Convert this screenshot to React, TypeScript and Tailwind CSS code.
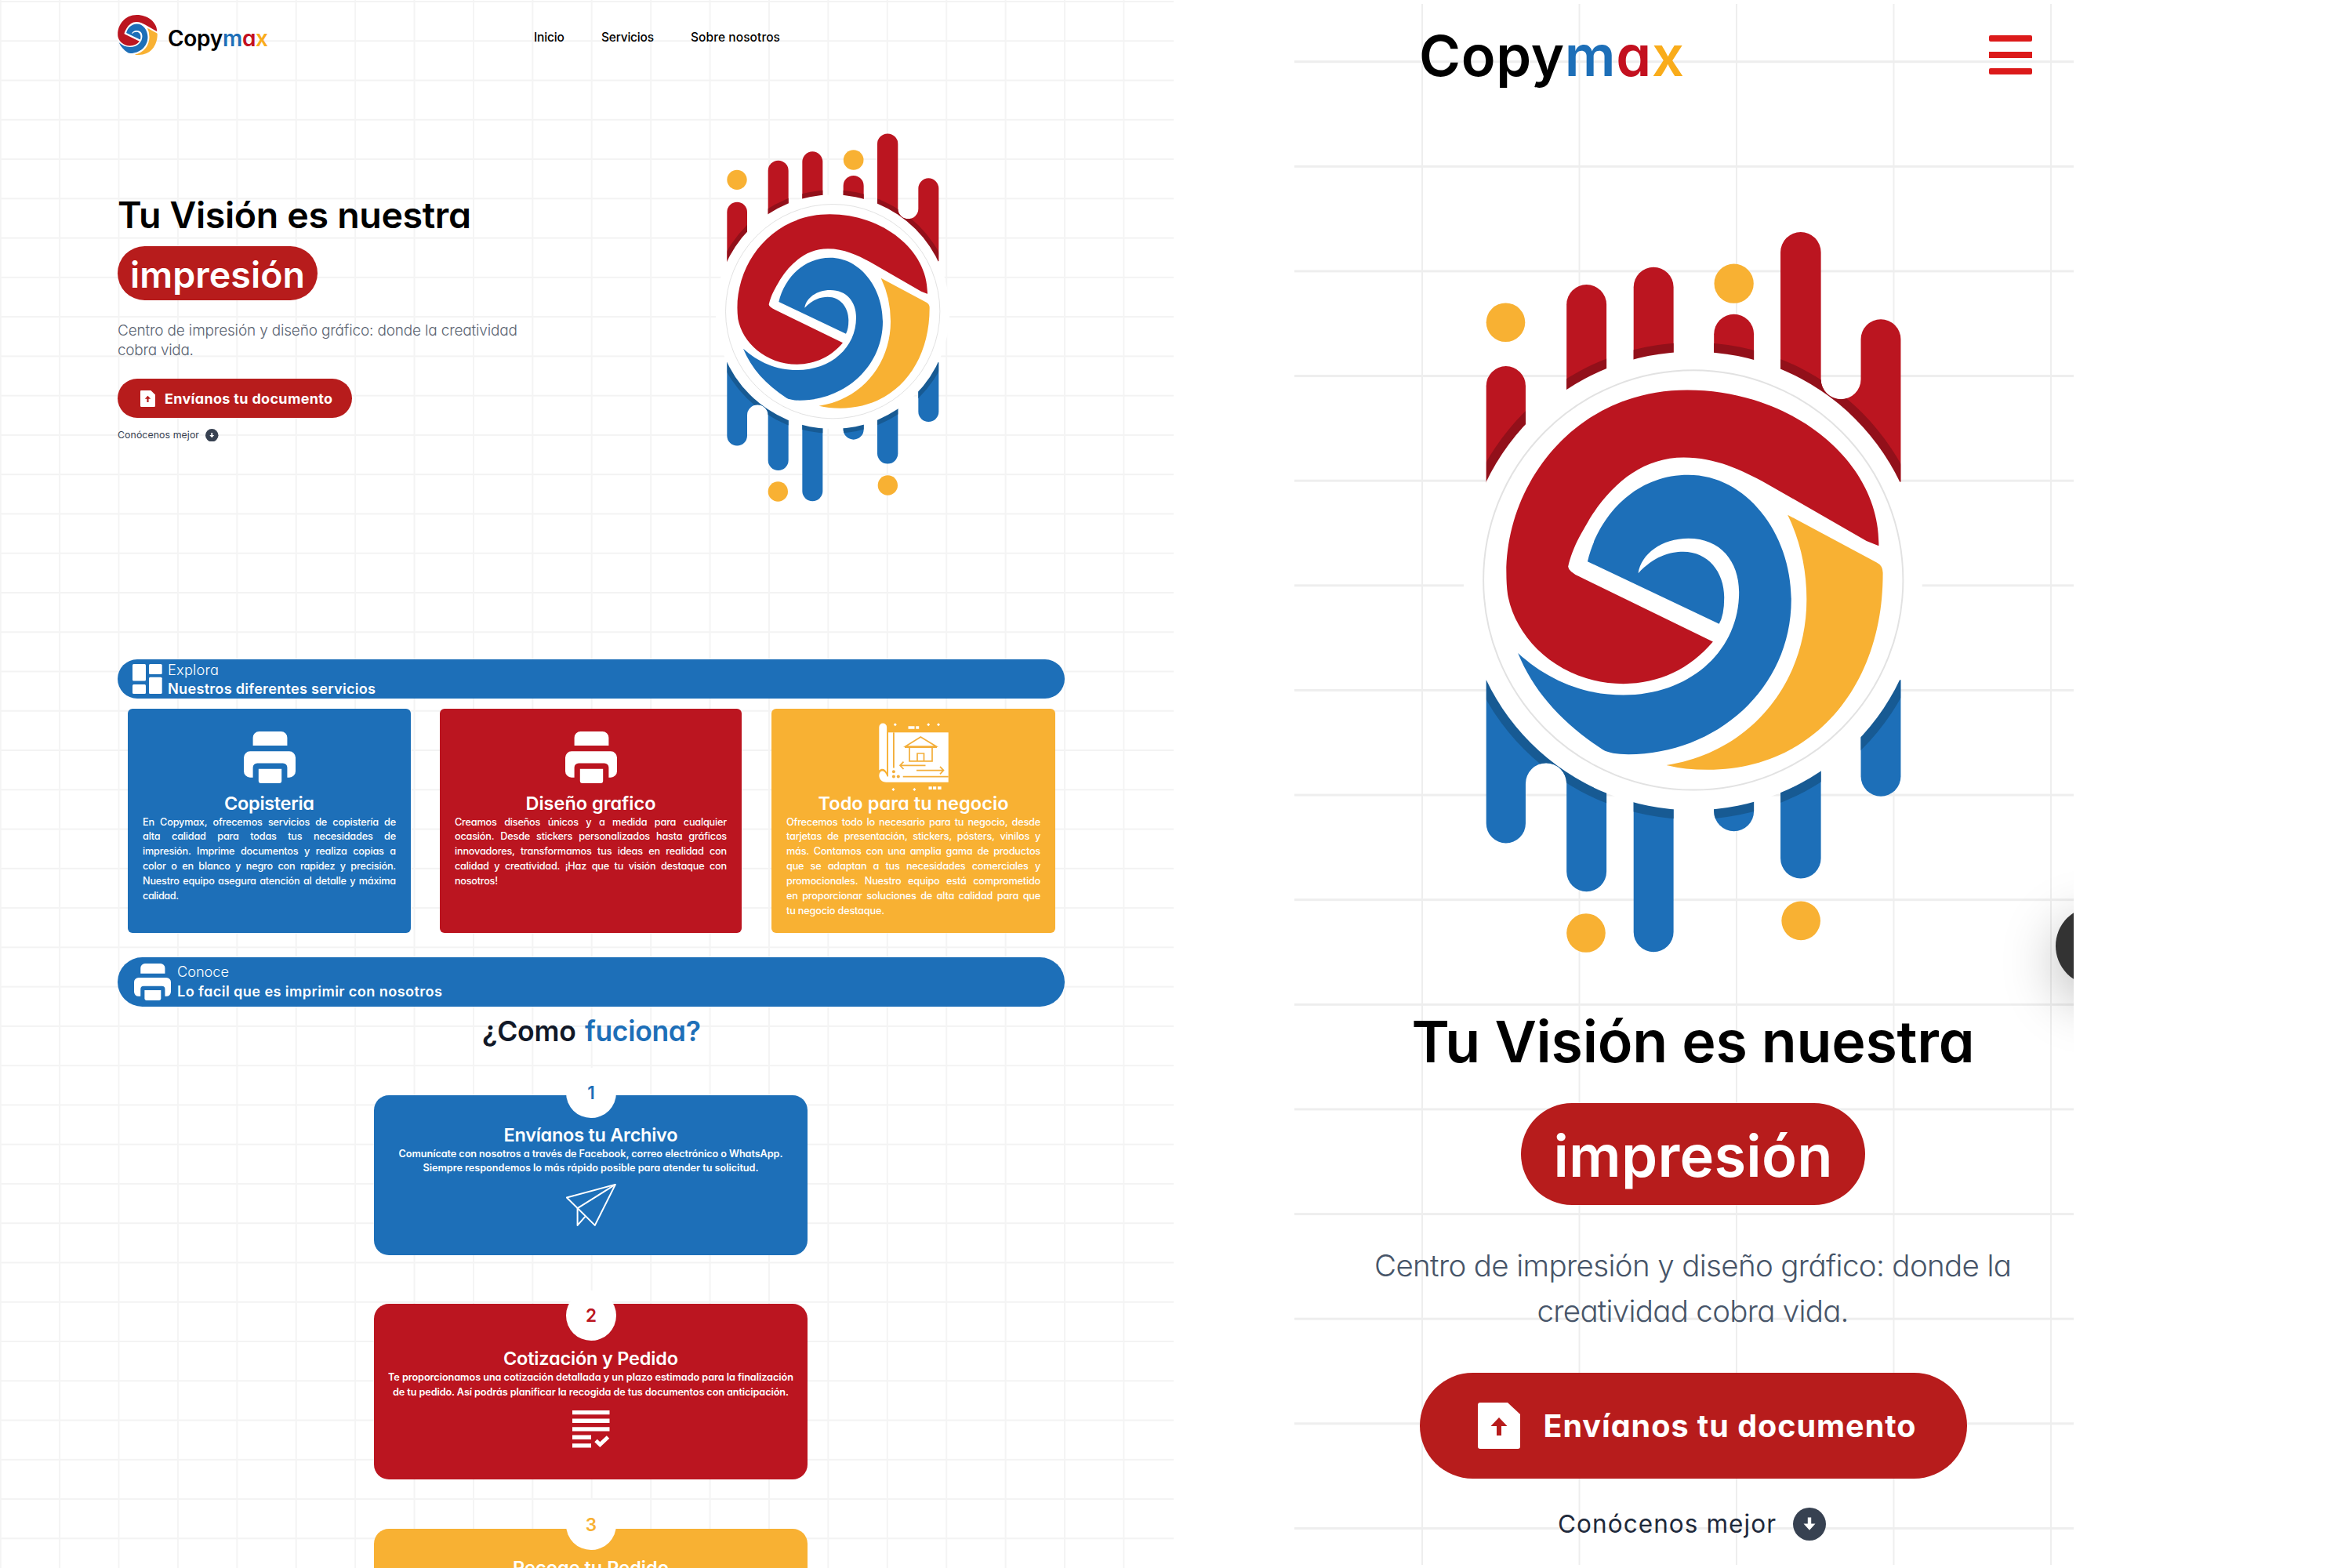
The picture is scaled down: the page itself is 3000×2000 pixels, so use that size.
import { useId, useLayoutEffect, useRef } from "react";
import type { ReactNode } from "react";

/* One line of text whose tracking is adjusted so that it spans exactly `w` pixels. */
function Fit({ w, className = "", children }: { w: number; className?: string; children: ReactNode }) {
  const ref = useRef<HTMLSpanElement>(null);
  useLayoutEffect(() => {
    const el = ref.current;
    if (!el) return;
    el.style.letterSpacing = "0px";
    el.style.marginRight = "0px";
    const n = (el.textContent || "").length;
    const natural = el.getBoundingClientRect().width;
    const ls = n > 1 ? (w - natural) / (n - 1) : 0;
    el.style.letterSpacing = `${ls}px`;
    el.style.marginRight = `${-ls}px`;
  }, [w, children]);
  return (
    <span ref={ref} className={`inline-block shrink-0 whitespace-nowrap ${className}`}>
      {children}
    </span>
  );
}

function Swirl() {
  return (
    <>
      <path
        fill="#bb1520"
        d="M908 704 L885 695 L690 583 C640 556 590 532 528 532 C450 532 390 580 345 650 C325 685 312 705 302 745 Q303 755 325 765 L585 892 C540 945 480 974 410 974 C290 974 200 890 184 800 C160 610 300 400 535 400 C740 400 912 540 909 704Z"
      />
      <path
        fill="#1d6fb8"
        d="M340 735 C360 650 430 566 537 566 C650 566 738 680 738 810 C738 985 590 1112 420 1112 Q385 1112 370 1103 C290 1050 235 990 204 914 C260 965 330 996 410 996 C540 996 636 910 636 795 C636 735 600 690 537 690 C485 690 445 720 439 758 C470 725 500 716 527 716 C575 716 607 755 607 805 Q607 840 597 857 Z"
      />
      <path
        fill="#f8b133"
        d="M731 644 L905 737 Q917 743 917 757 C918 980 780 1142 575 1142 Q530 1142 494 1133 C660 1108 768 970 768 810 Q768 720 731 644Z"
      />
    </>
  );
}

function RedDrips() {
  return (
    <>
      <path d="M142 600V392a38.5 38.5 0 0 1 77 0V600z" />
      <path d="M299 600V233a39 39 0 0 1 78 0V600z" />
      <path d="M430 600V199a39 39 0 0 1 78 0V600z" />
      <path d="M587 600V291a39 39 0 0 1 78 0V600z" />
      <path d="M717 600V131a39.5 39.5 0 0 1 79 0V379a39 39 0 0 0 78 0V301a39 39 0 0 1 78 0V579L900 600z" />
    </>
  );
}

function BlueDrips() {
  return (
    <>
      <path d="M142 967L180 950H377V1341a39 39 0 0 1-78 0V1169a40 40 0 0 0-80 0V1247a38.5 38.5 0 0 1-77 0z" />
      <path d="M430 1000V1459a39 39 0 0 0 78 0V1000z" />
      <path d="M587 1000V1223a39 39 0 0 0 78 0V1000z" />
      <path d="M717 1000V1315a39.5 39.5 0 0 0 79 0V1000z" />
      <path d="M874 950V1155a39 39 0 0 0 78 0V967z" />
    </>
  );
}

function Emblem({ className }: { className: string }) {
  const id = useId();
  return (
    <svg viewBox="0 0 1080 1560" className={className}>
      <clipPath id={`${id}r`}>
        <RedDrips />
      </clipPath>
      <clipPath id={`${id}b`}>
        <BlueDrips />
      </clipPath>
      <g fill="#bb1520">
        <RedDrips />
      </g>
      <g fill="#1d6fb8">
        <BlueDrips />
      </g>
      <g clipPath={`url(#${id}r)`}>
        <circle cx="546" cy="773" r="466" fill="#92101a" />
      </g>
      <g clipPath={`url(#${id}b)`}>
        <circle cx="546" cy="773" r="466" fill="#175a93" />
      </g>
      <circle cx="546" cy="773" r="448" fill="#fff" />
      <circle cx="546.5" cy="771.5" r="410" fill="none" stroke="#e2e2e2" strokeWidth="3" />
      <g fill="#f8b133">
        <circle cx="180" cy="268" r="38" />
        <circle cx="626" cy="192" r="38.5" />
        <circle cx="337" cy="1461" r="38" />
        <circle cx="757" cy="1437" r="38" />
      </g>
      <Swirl />
    </svg>
  );
}

function PrinterIcon({ className }: { className: string }) {
  return (
    <svg viewBox="0 0 66 66" fill="#fff" className={className}>
      <path d="M11.6 18V8a8 8 0 0 1 8-8H47.4a8 8 0 0 1 8 8V18z" />
      <path d="M8 25.3H58a8 8 0 0 1 8 8V50.7a8 8 0 0 1-8 8H55.4V46a5.5 5.5 0 0 0-5.5-5.5H17.1a5.5 5.5 0 0 0-5.5 5.5V58.7H8a8 8 0 0 1-8-8V33.3a8 8 0 0 1 8-8z" />
      <path d="M18.8 47.7H48.2V63a3 3 0 0 1-3 3H21.8a3 3 0 0 1-3-3z" />
    </svg>
  );
}

function BlueprintIcon({ className }: { className: string }) {
  return (
    <svg viewBox="0 0 89 88" fill="#fff" className={className}>
      <path d="M0.300 5.500a4.900 4.900 0 0 1 9.800 0V63.500C8.500 58.500 3.500 57.500 0.300 60.500z" />
      <path d="M12 12.300H88.700V75.700H9.500C3.500 75.700 0.300 71.500 0.300 67C0.800 59.500 8 59.500 10.500 68.500L12 68.500z" />
      <g fill="none" stroke="#f3ae3a" strokeWidth="1.700">
        <path d="M18.900 12.300V57.500" strokeWidth="1.900" />
        <path d="M30.700 68.600H88.700" strokeWidth="1.900" />
        <path d="M34 30L53.300 18L73 30z" />
        <path d="M33 31H74" strokeWidth="2.200" />
        <path d="M39 31V48.800H68V31M49 48.800V39H57.500V48.800" />
        <path d="M59.500 54.300H27.500M31.500 49.600L27 54.300L31.500 59M48 60.600H82M78 55.800L82.500 60.600L78 65.400" />
      </g>
      <g fill="#f3ae3a">
        <circle cx="18.900" cy="62.300" r="2" />
        <circle cx="18.900" cy="68.600" r="2" />
        <circle cx="24.800" cy="68.600" r="2" />
      </g>
      <path d="M20.800 0.300l2 2-2 2-2-2zM63.200 0.300l2 2-2 2-2-2zM76 0.300l2 2-2 2-2-2zM37.500 4.200h8v3.500h-8zM47.200 4.200h4v3.500h-4z" />
      <path d="M18.400 83l2 2-2 2-2-2zM45.300 83l2 2-2 2-2-2zM63.500 81.200h4.200v3.800h-4.200zM69 81.200h4.200v3.800h-4.200zM75 81.200h4.600v3.800h-4.600z" />
    </svg>
  );
}

function DashboardIcon() {
  return (
    <svg viewBox="0 0 38 38" fill="#fff" className="h-[38px] w-[38px] shrink-0">
      <rect x="0" y="0" width="17" height="21.500" rx="1.500" />
      <rect x="21" y="0" width="16.700" height="13" rx="1.500" />
      <rect x="0" y="26" width="17" height="12" rx="1.500" />
      <rect x="21" y="16.800" width="16.700" height="21.200" rx="1.500" />
    </svg>
  );
}

function FileUpIcon({ className }: { className: string }) {
  return (
    <svg viewBox="0 0 54 59" className={className}>
      <path fill="#fff" d="M3 0H38L54 15V56a3 3 0 0 1-3 3H3a3 3 0 0 1-3-3V3a3 3 0 0 1 3-3z" />
      <path fill="#b71c1c" d="M27 19L37.500 30H30V42H24V30H16.500z" />
    </svg>
  );
}

function DownCircleIcon({ className }: { className: string }) {
  return (
    <svg viewBox="0 0 42 42" className={className}>
      <circle cx="21" cy="21" r="21" fill="#374151" />
      <path fill="#fff" d="M18.800 12.500H23.200V20.500H28.500L21 28.800L13.500 20.500H18.800z" />
    </svg>
  );
}

function PlaneIcon() {
  return (
    <svg viewBox="0 0 64 54" fill="none" stroke="#fff" strokeWidth="2" strokeLinejoin="round" className="mt-[10px] h-[54px] w-[64px]">
      <path d="M0.900 17.500L62.900 0.900L36.800 52.900z" />
      <path d="M62.900 0.900L14.600 31.200V52.900L24.300 41.800" />
    </svg>
  );
}

function ChecklistIcon() {
  return (
    <svg viewBox="0 0 48 48" fill="#fff" className="mt-[13px] h-[48px] w-[48px]">
      <path d="M0 0h47.500v5.300H0zM0 10.600h47.500v5.300H0zM0 21.200h47.500v5.300H0zM0 31.600h24v5.300H0zM0 42.200h24v5.300H0z" />
      <path d="M30 38.500L35.300 43.500L45.500 34" fill="none" stroke="#fff" strokeWidth="5" />
    </svg>
  );
}

function Brand() {
  return (
    <>
      Copy<span className="text-[#1d6fb8]">m</span>
      <span className="text-[#c3101f]">a</span>
      <span className="text-[#f9ac1b]">x</span>
    </>
  );
}

function Service({
  className,
  icon,
  title,
  titleWidth,
  lines,
  last,
  lastWidth,
}: {
  className: string;
  icon: ReactNode;
  title: string;
  titleWidth: number;
  lines: string[];
  last: string;
  lastWidth: number;
}) {
  return (
    <article className={`flex h-[286px] flex-col items-center rounded-[6px] px-[19px] text-white ${className}`}>
      <div className="flex h-[105px] items-center">{icon}</div>
      <Fit w={titleWidth} className="text-[23.5px] leading-[31px] font-semibold">
        {title}
      </Fit>
      <div className="w-full text-[12.7px] leading-[18.9px] font-medium tracking-[-0.2px]">
        {lines.map((line) => (
          <p key={line} className="whitespace-nowrap [text-align-last:justify]">
            {line}
          </p>
        ))}
        <Fit w={lastWidth}>{last}</Fit>
      </div>
    </article>
  );
}

function Step({
  className,
  badge,
  number,
  title,
  titleWidth,
  lines,
  icon,
}: {
  className: string;
  badge: string;
  number: string;
  title: string;
  titleWidth: number;
  lines: [string, number][];
  icon?: ReactNode;
}) {
  return (
    <article className={`relative flex w-[553px] shrink-0 flex-col items-center rounded-[19px] text-white ${className}`}>
      <div
        className={`absolute left-[245px] flex size-[64px] items-center justify-center rounded-full bg-white text-[22.5px] leading-[30px] font-semibold ${badge}`}
      >
        {number}
      </div>
      <Fit w={titleWidth} className="text-[23.5px] leading-[31px] font-semibold">
        {title}
      </Fit>
      {lines.map(([text, w]) => (
        <Fit key={text} w={w} className="text-[12.7px] leading-[18.9px] font-semibold">
          {text}
        </Fit>
      ))}
      {icon}
    </article>
  );
}

function Desktop() {
  return (
    <div className="h-[2000px] w-[1497px] shrink-0 overflow-hidden bg-[linear-gradient(to_right,#f4f4f4_1.5px,transparent_1.5px),linear-gradient(to_bottom,#f3f3f3_1.5px,transparent_1.5px)] bg-[size:75.42px_50.27px] bg-[position:-0.300px_1px] pl-[150px]">
      <header className="flex items-center pt-[19px]">
        <svg viewBox="181 400 737 742" className="h-[51px] w-[51px]">
          <Swirl />
        </svg>
        <Fit w={128} className="mt-[8px] ml-[13px] text-[28px] leading-[36px] font-semibold text-black">
          <Brand />
        </Fit>
        <nav className="mt-[6px] ml-[339px] flex gap-[47px] text-[15.5px] leading-[24px] font-medium text-black">
          <Fit w={39}>Inicio</Fit>
          <Fit w={67}>Servicios</Fit>
          <Fit w={114}>Sobre nosotros</Fit>
        </nav>
      </header>

      <section className="flex h-[771px]">
        <div className="flex w-[730px] shrink-0 flex-col items-start pt-[174px]">
          <Fit w={451} className="text-[46.5px] leading-[60px] font-semibold text-black">
            Tu Visión es nuestra
          </Fit>
          <div className="mt-[10px] flex h-[69px] w-[255px] items-center justify-center rounded-full bg-[#b71c1c] pt-[2px] text-[46.5px] leading-[60px] font-semibold text-white">
            <Fit w={223}>impresión</Fit>
          </div>
          <p className="mt-[26px] flex flex-col items-start text-[19px] leading-[25px] font-light text-[#5b6472]">
            <Fit w={510}>Centro de impresión y diseño gráfico: donde la creatividad</Fit>
            <Fit w={97}>cobra vida.</Fit>
          </p>
          <div className="mt-[24px] flex h-[50px] w-[299px] items-center rounded-full bg-[#b71c1c] pl-[29px] text-white">
            <FileUpIcon className="h-[21px] w-[19px]" />
            <Fit w={214} className="ml-[12px] pt-px text-[18px] leading-[24px] font-bold">
              Envíanos tu documento
            </Fit>
          </div>
          <div className="mt-[13px] flex items-center text-[12.3px] leading-[18px] font-normal text-[#374151]">
            <Fit w={104}>Conócenos mejor</Fit>
            <DownCircleIcon className="ml-[8px] size-[16.5px]" />
          </div>
        </div>
        <Emblem className="mt-[70px] h-[520px] w-[360px]" />
      </section>

      <div className="flex h-[50px] w-[1208px] items-center rounded-full bg-[#1d6fb8] pl-[19px] text-[18.2px] leading-[24.500px] text-white">
        <DashboardIcon />
        <div className="ml-[7px] flex flex-col items-start">
          <Fit w={65} className="font-light">
            Explora
          </Fit>
          <Fit w={265} className="font-semibold">
            Nuestros diferentes servicios
          </Fit>
        </div>
      </div>

      <div className="mt-[12.5px] ml-[13px] flex">
        <Service
          className="w-[361px] bg-[#1d6fb8]"
          icon={<PrinterIcon className="mt-[20px] size-[66px]" />}
          title="Copisteria"
          titleWidth={115}
          lines={[
            "En Copymax, ofrecemos servicios de copistería de",
            "alta calidad para todas tus necesidades de",
            "impresión. Imprime documentos y realiza copias a",
            "color o en blanco y negro con rapidez y precisión.",
            "Nuestro equipo asegura atención al detalle y máxima",
          ]}
          last="calidad."
          lastWidth={46}
        />
        <Service
          className="ml-[37px] w-[385px] bg-[#bb1520]"
          icon={<PrinterIcon className="mt-[20px] size-[66px]" />}
          title="Diseño grafico"
          titleWidth={166}
          lines={[
            "Creamos diseños únicos y a medida para cualquier",
            "ocasión. Desde stickers personalizados hasta gráficos",
            "innovadores, transformamos tus ideas en realidad con",
            "calidad y creatividad. ¡Haz que tu visión destaque con",
          ]}
          last="nosotros!"
          lastWidth={55}
        />
        <Service
          className="ml-[38px] w-[362px] bg-[#f8b133]"
          icon={<BlueprintIcon className="mt-[20px] h-[88px] w-[89px]" />}
          title="Todo para tu negocio"
          titleWidth={243}
          lines={[
            "Ofrecemos todo lo necesario para tu negocio, desde",
            "tarjetas de presentación, stickers, pósters, vinilos y",
            "más. Contamos con una amplia gama de productos",
            "que se adaptan a tus necesidades comerciales y",
            "promocionales. Nuestro equipo está comprometido",
            "en proporcionar soluciones de alta calidad para que",
          ]}
          last="tu negocio destaque."
          lastWidth={125}
        />
      </div>

      <div className="mt-[31.500px] flex h-[62.500px] w-[1208px] items-center rounded-full bg-[#1d6fb8] pl-[21px] text-[18.2px] leading-[25px] text-white">
        <PrinterIcon className="size-[47px]" />
        <div className="ml-[8px] flex flex-col items-start">
          <Fit w={66} className="font-light">
            Conoce
          </Fit>
          <Fit w={338} className="font-semibold">
            Lo facil que es imprimir con nosotros
          </Fit>
        </div>
      </div>

      <h2 className="mt-[10px] ml-[465px] flex gap-[11px] text-[35.5px] leading-[44px] font-semibold text-[#111827]">
        <Fit w={120}>¿Como</Fit>
        <Fit w={148} className="text-[#1d6fb8]">
          fuciona?
        </Fit>
      </h2>

      <div className="mt-[59px] ml-[327px] flex flex-col">
        <Step
          className="h-[204px] bg-[#1d6fb8] pt-[35px]"
          badge="top-[-35px] text-[#1d6fb8]"
          number="1"
          title="Envíanos tu Archivo"
          titleWidth={222}
          lines={[
            ["Comunícate con nosotros a través de Facebook, correo electrónico o WhatsApp.", 490],
            ["Siempre respondemos lo más rápido posible para atender tu solicitud.", 428],
          ]}
          icon={<PlaneIcon />}
        />
        <Step
          className="mt-[62.500px] h-[223.500px] bg-[#bb1520] pt-[54px]"
          badge="top-[-17px] text-[#bb1520]"
          number="2"
          title="Cotización y Pedido"
          titleWidth={223}
          lines={[
            ["Te proporcionamos una cotización detallada y un plazo estimado para la finalización", 517],
            ["de tu pedido. Así podrás planificar la recogida de tus documentos con anticipación.", 505],
          ]}
          icon={<ChecklistIcon />}
        />
        <Step
          className="mt-[63.500px] h-[223px] bg-[#f8b133] pt-[34px]"
          badge="top-[-37px] text-[#f8b133]"
          number="3"
          title="Recoge tu Pedido"
          titleWidth={199}
          lines={[]}
        />
      </div>
    </div>
  );
}

function Mobile() {
  return (
    <div className="relative mt-[5px] ml-[154px] flex h-[1991px] w-[994px] shrink-0 flex-col items-center overflow-hidden bg-[linear-gradient(to_right,#eeeeee_2px,transparent_2px),linear-gradient(to_bottom,#eeeeee_2.500px,transparent_2.500px)] bg-[size:200.500px_133.630px] bg-[position:162px_72.200px] pl-[23px]">
      <header className="flex w-full items-center pt-[24px] pl-[136px]">
        <Fit w={338} className="pt-[2px] text-[72px] leading-[80px] font-semibold text-black">
          <Brand />
        </Fit>
        <div className="mb-px ml-[389px] flex w-[55px] flex-col gap-[13px]">
          <div className="h-[8px] rounded-[2px] bg-[#dc1a1a]" />
          <div className="h-[8px] bg-[#dc1a1a]" />
          <div className="h-[8px] rounded-[2px] bg-[#dc1a1a]" />
        </div>
      </header>
      <Emblem className="mt-[125px] mr-[9px] h-[1019px] w-[705px] shrink-0" />
      <Fit w={718} className="mt-[29px] text-[73.500px] leading-[90px] font-semibold text-black">
        Tu Visión es nuestra
      </Fit>
      <div className="mt-[33px] flex h-[130px] w-[439px] shrink-0 items-center justify-center rounded-full bg-[#b71c1c] pt-[3px] text-[74px] leading-[90px] font-semibold text-white">
        <Fit w={356}>impresión</Fit>
      </div>
      <p className="mt-[48px] flex flex-col items-center text-[38.500px] leading-[58.300px] font-light text-[#475569]">
        <Fit w={813}>Centro de impresión y diseño gráfico: donde la</Fit>
        <Fit w={398}>creatividad cobra vida.</Fit>
      </p>
      <div className="mt-[49px] flex h-[135px] w-[698px] shrink-0 items-center rounded-full bg-[#b71c1c] pl-[74px] text-white">
        <FileUpIcon className="h-[59px] w-[54px]" />
        <Fit w={475} className="ml-[30px] pt-[2px] text-[39.500px] leading-[50px] font-bold">
          Envíanos tu documento
        </Fit>
      </div>
      <div className="mt-[37px] flex items-center text-[31.500px] leading-[42px] font-normal text-[#1e293b]">
        <Fit w={278}>Conócenos mejor</Fit>
        <DownCircleIcon className="mr-[3px] ml-[22px] size-[42px]" />
      </div>
      <div className="absolute top-[1151px] left-[971px] size-[101px] rounded-full bg-[#333333] shadow-[0_20px_70px_rgba(0,0,0,0.28)]" />
    </div>
  );
}

export default function App() {
  return (
    <main className="flex h-[2000px] w-[3000px] overflow-hidden bg-white [font-family:Inter,'Open_Sans',sans-serif] [font-feature-settings:'cv11']">
      <Desktop />
      <Mobile />
    </main>
  );
}
